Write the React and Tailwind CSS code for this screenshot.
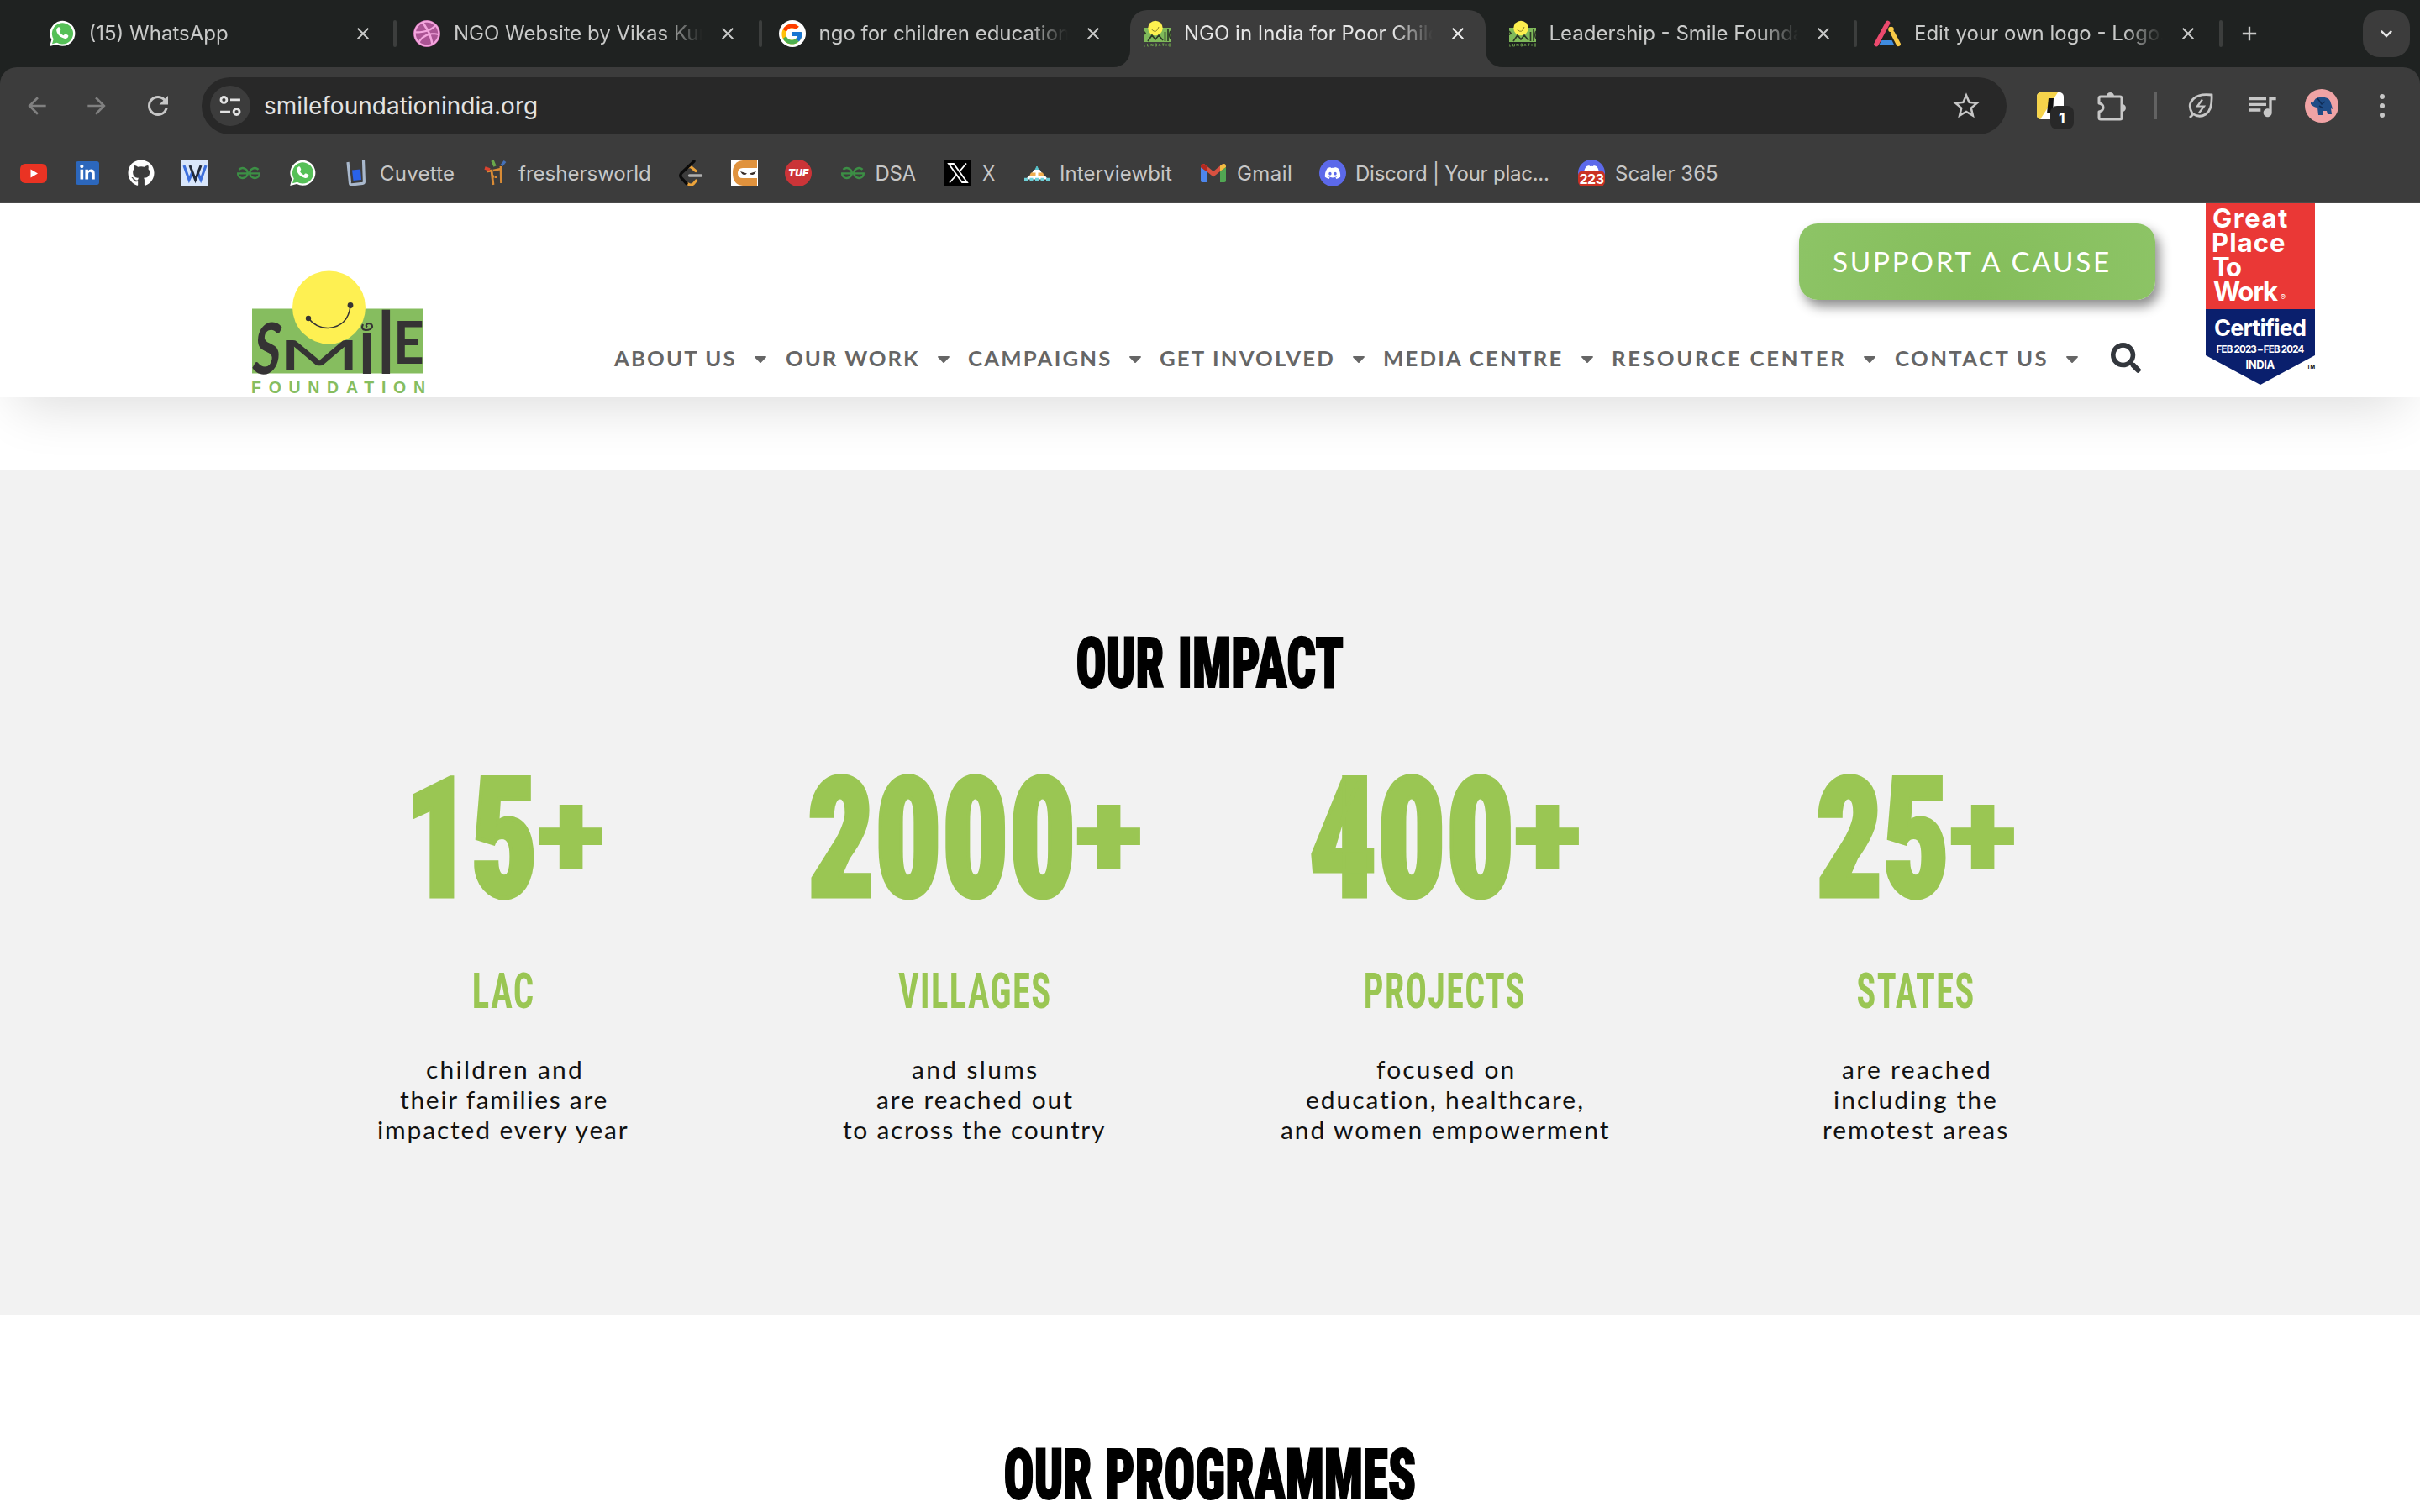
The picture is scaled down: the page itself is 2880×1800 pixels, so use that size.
import React, { useLayoutEffect, useRef, useState } from "react";
import { FaDribbble, FaGithub, FaLinkedinIn, FaDiscord, FaSearch, FaCaretDown } from "react-icons/fa";
import { FcGoogle } from "react-icons/fc";
import { SiGeeksforgeeks } from "react-icons/si";
import { MdArrowBack, MdArrowForward, MdRefresh, MdStarBorder, MdQueueMusic, MdClose, MdAdd, MdKeyboardArrowDown } from "react-icons/md";

const UI = "font-['Inter',sans-serif]";
const LATO = "font-['Lato',sans-serif]";
const DISPLAY = "font-['Roboto',sans-serif] [font-stretch:75%]";

/*
 * Single line of text whose ink is exactly `w` wide and whose baseline sits `h` below the box top.
 * mode "spacing": tracks the letters out; "scale": condenses them; "box": fills w × h with the ink.
 */
function Fit({ w, h, mode = "spacing", stretch = 1, stroke = 0, className = "", children }) {
  const ref = useRef(null);
  const [style, setStyle] = useState({});
  useLayoutEffect(() => {
    const cs = getComputedStyle(ref.current);
    const ctx = document.createElement("canvas").getContext("2d");
    const width = cs.fontStretch === "75%" ? "condensed " : "";
    ctx.font = `${cs.fontWeight} ${width}${cs.fontSize} ${cs.fontFamily}`;
    const tracked = mode !== "spacing" && cs.letterSpacing !== "normal";
    if (tracked) ctx.letterSpacing = cs.letterSpacing;
    const m = ctx.measureText(children);
    const track = tracked ? parseFloat(cs.letterSpacing) : 0;
    const right = Math.min(m.actualBoundingBoxRight, m.width - track + 4) + stroke / 2;
    const left = -m.actualBoundingBoxLeft - stroke / 2;
    const ink = right - left;
    const a = m.fontBoundingBoxAscent;
    const d = m.fontBoundingBoxDescent;
    const base = (h - (a + d)) / 2 + a;
    const dy = h - base;
    if (mode === "box") {
      const s = w / ink;
      const sy = h / (m.actualBoundingBoxAscent + m.actualBoundingBoxDescent);
      setStyle({ transform: `translate(${-left * s}px, ${-(base - m.actualBoundingBoxAscent) * sy}px) scale(${s}, ${sy})` });
    } else if (mode === "scale") {
      const s = w / ink;
      setStyle({ transform: `translate(${-left * s}px, ${dy}px) scaleX(${s})` });
    } else {
      setStyle({
        letterSpacing: `${(w / stretch - ink) / Math.max(1, children.length - 1)}px`,
        transform: `translate(${-left * stretch}px, ${dy}px) scaleX(${stretch})`,
      });
    }
  }, [w, h, mode, stretch, stroke, children]);
  return (
    <div className={`shrink-0 ${className}`} style={{ width: w, height: h, lineHeight: `${h}px` }}>
      <span ref={ref} className="inline-block origin-top-left whitespace-nowrap align-top" style={style}>
        {children}
      </span>
    </div>
  );
}

function WhatsAppIcon() {
  return (
    <svg viewBox="0 0 32 32" className="size-8">
      <path d="M1.200 31 3.300 23.200A15 15 0 1 1 9.200 29Z" fill="#fff" />
      <path d="M4 28.300 5.700 22.600A12.600 12.600 0 1 1 9.800 26.700Z" fill="#55c057" />
      <path d="M11.200 8.600c.6-.6 1.600-.5 2 .3l1 2.300c.2.6 0 1.100-.4 1.500l-.9 1c1 2 2.700 3.600 4.800 4.500l1.200-1.400c.4-.4.9-.5 1.400-.3l2.400 1.200c.6.3.8.8.6 1.500-.5 2-2.300 3-4.200 2.700-5.200-1-9-4.700-9.900-9.300-.200-1.500.8-3.200 2-4Z" fill="#fff" />
    </svg>
  );
}

function SmileMark() {
  return (
    <svg viewBox="0 0 32 32" className="size-8">
      <rect x="0" y="9" width="32" height="17" fill="#7fb95a" />
      <circle cx="14" cy="9.500" r="8.700" fill="#fdf04f" />
      <path d="M9.500 11q5.500 6 8.500-3" fill="none" stroke="#6b6420" strokeWidth=".8" />
      <path d="M0 13l2 2.500-2 2M5 25l5-7 4 5 4-5 5 6M25.500 14v11M29 11v14M32 13q-2.500 5 0 9" fill="none" stroke="#2e3a28" strokeWidth="1.700" />
      <path d="M0 28v3h2M4.500 28v3h2v-3M9 31v-3l2 3v-3M14 28v3h1.500v-3zM18 31l1-3 1 3M22 28h2.500M23.300 28v3M27 28v3M30 28h2v3h-2z" fill="none" stroke="#6fa54e" strokeWidth=".8" />
    </svg>
  );
}

function LogoAiIcon() {
  return (
    <svg viewBox="0 0 32 32" className="size-8">
      <path d="M16.500 3.500 3 28.500" stroke="#ec4a6e" strokeWidth="5.600" strokeLinecap="round" />
      <circle cx="20.500" cy="11" r="3.300" fill="#f8c947" />
      <path d="M22.500 15.500 29.300 28.500" stroke="#f8c947" strokeWidth="5.200" strokeLinecap="round" />
      <path d="M9.500 24h12l3 6H8.500q-2.500 0-1.500-2Z" fill="#3f8ce0" />
    </svg>
  );
}

const tabs = [
  { title: "(15) WhatsApp", icon: <WhatsAppIcon /> },
  { title: "NGO Website by Vikas Kumar", icon: <span className="flex size-8 items-center justify-center rounded-full bg-[#ab5494]"><FaDribbble className="size-8 text-[#f3a5dd]" /></span> },
  { title: "ngo for children education", icon: <span className="flex size-8 items-center justify-center rounded-full bg-white"><FcGoogle className="size-[29px]" /></span> },
  { title: "NGO in India for Poor Children", icon: <SmileMark />, active: true },
  { title: "Leadership - Smile Foundation", icon: <SmileMark /> },
  { title: "Edit your own logo - Logo.com", icon: <LogoAiIcon /> },
];

function Tab({ tab, divider }) {
  return (
    <div className="relative flex h-20 w-[434.500px] shrink-0 pt-3">
      {tab.active && (
        <div className="absolute top-3 left-0 h-17 w-[423px] rounded-t-[20px] bg-[#3c3c3c]">
          <svg viewBox="0 0 20 20" className="absolute bottom-0 -left-5 size-5"><path d="M20 0v20H0A20 20 0 0 0 20 0" fill="#3c3c3c" /></svg>
          <svg viewBox="0 0 20 20" className="absolute -right-5 bottom-0 size-5"><path d="M0 0v20h20A20 20 0 0 1 0 0" fill="#3c3c3c" /></svg>
        </div>
      )}
      <div className="relative flex h-14 items-center pl-4">
        {tab.icon}
        <div className={`ml-4 w-[296px] overflow-hidden text-[24px] leading-14 whitespace-nowrap ${tab.active ? "text-[#e6e6e6]" : "text-[#c9cac9]"} [mask-image:linear-gradient(to_right,#000_84%,transparent)]`}>{tab.title}</div>
        <MdClose className={`ml-[18px] size-6 ${tab.active ? "text-[#ededed]" : "text-[#c9cac9]"}`} />
      </div>
      {divider && <div className="absolute top-6 right-1 h-8 w-1 rounded-full bg-[#3c3e3d]" />}
    </div>
  );
}

function Gfg() {
  return <SiGeeksforgeeks className="size-8 p-0.5 text-[#3c8f45]" />;
}

/* w: label width, slot: distance reserved for the whole entry */
const bookmarks = [
  { slot: 32, icon: <svg viewBox="0 0 32 32" className="size-8"><rect y="5" width="32" height="23" rx="6" fill="#ea3323" /><path d="M12.500 11.500v10l8.500-5z" fill="#fff" /></svg> },
  { slot: 32, icon: <span className="mx-0.5 flex h-7 w-7 items-center justify-center rounded-[3px] bg-[#2c67bc]"><FaLinkedinIn className="size-5 text-white" /></span> },
  { slot: 32, icon: <FaGithub className="size-8 text-white" /> },
  { slot: 32, icon: <svg viewBox="0 0 32 32" className="size-8"><rect width="32" height="32" fill="#d9e6fb" /><path d="M3 7l6 17 4-9M19 15l4 9 6-17" fill="none" stroke="#3d6fdc" strokeWidth="3.200" /><path d="M10 7l6.500 17L23 7" fill="none" stroke="#222a3a" strokeWidth="3" /></svg> },
  { slot: 32, icon: <Gfg /> },
  { slot: 32, icon: <WhatsAppIcon /> },
  { slot: 132, icon: <svg viewBox="0 0 32 32" className="size-8"><path d="M6 3l2.500 25q.3 2 2 1.800l13-1.500q2-.300 1.900-2.300L24.500 1" fill="none" stroke="#a9b8cc" strokeWidth="3.200" /><path d="M11 12.500l10-1 1 12.500-9.500 1z" fill="#2a62e8" /></svg>, label: "Cuvette", w: 87 },
  { slot: 202, icon: <svg viewBox="0 0 32 32" className="size-8"><path d="M7 14l6-1 2 17M24 8l.5 20M15 13l9-2M13 20h3M18 19v3" fill="none" stroke="#d98b35" strokeWidth="2.800" /><path d="M5 10l6 2" stroke="#d9432f" strokeWidth="3.500" /><path d="M14 1l3 7" stroke="#6aa84a" strokeWidth="3.500" /><path d="M29 2l-4 5" stroke="#4571b8" strokeWidth="3.500" /></svg>, label: "freshersworld", w: 156 },
  { slot: 32, icon: <svg viewBox="0 0 32 32" className="size-8"><path d="M13 9l3-.5 6 5M13 29q3 2.500 6 0l3.500-4" fill="none" stroke="#eba33b" strokeWidth="3.200" strokeLinecap="round" /><path d="M20 2 5 16q-2.500 3 0 6l6 6.500" fill="none" stroke="#0b0b0b" strokeWidth="3.400" strokeLinecap="round" /><path d="M14.500 19h14" stroke="#b0b0b0" strokeWidth="3.400" strokeLinecap="round" /></svg> },
  { slot: 32, icon: <svg viewBox="0 0 32 32" className="size-8"><rect width="32" height="32" fill="#fff" /><path d="M31 1H14Q2 2 2 16t12 15h17z" fill="#e0923d" /><path d="M31 10H14q-6 0-6 6t6 6h17z" fill="#fff" /><path d="M11 14l8 2.500q-2 2-4 1.500t-4-4M30 14l-8 2.500q2 2 4 1.500t4-4" fill="#3a2f2a" /></svg> },
  { slot: 32.5, icon: <span className="flex size-8 items-center justify-center rounded-full bg-[#cb3438] text-[12px] leading-none font-black text-white italic">TUF</span> },
  { slot: 93.5, icon: <Gfg />, label: "DSA", w: 46 },
  { slot: 62, icon: <svg viewBox="0 0 32 32" className="size-8"><rect width="32" height="32" fill="#000" /><path d="M5 5h6l16 22h-6zM26 4.500 18 14M14.500 18 6 27.500" fill="none" stroke="#fff" strokeWidth="1.800" /></svg>, label: "X", w: 15, single: true },
  { slot: 178, icon: <svg viewBox="0 0 32 32" className="size-8"><path d="M16 8l2 4h-4z" fill="#59c4cc" stroke="#59c4cc" /><path d="M12.500 12h7l2.500 4H10z" fill="#fff" /><path d="M9 15.500h14l2 4H7z" fill="#f0ad4e" /><path d="M14.500 15h3v5h-3z" fill="#fff" /><path d="M6 19.500h20l3 4H3z" fill="#fff" /><path d="M1 23.500h30" stroke="#6fd0d8" strokeWidth="3.500" strokeDasharray="4 2.500" /></svg>, label: "Interviewbit", w: 132 },
  { slot: 110, icon: <svg viewBox="0 0 32 32" className="size-8"><path d="M1 9v16q0 2 2 2h5V14z" fill="#4d86ec" /><path d="M24 14v13h5q2 0 2-2V9z" fill="#51a753" /><path d="M1 9q0-4 4-4l11 9L27 5l-3 9-8 6.500-8-6.500z" fill="#d85140" /><path d="M24 7.500q7-5.500 7 1.500l-7 5z" fill="#f2bd42" /><path d="M8 7.500Q1 2 1 9l7 5z" fill="#b3281f" /></svg>, label: "Gmail", w: 63 },
  { slot: 276, icon: <span className="flex size-8 items-center justify-center rounded-full bg-[#5c69ea]"><FaDiscord className="size-5 text-white" /></span>, label: "Discord | Your plac...", w: 228 },
  { slot: 166, icon: <span className="relative flex size-8 justify-center rounded-full bg-[#5c69ea]"><FaDiscord className="mt-1 size-5 text-white" /><span className="absolute bottom-0 flex h-[19px] w-8 items-center justify-center rounded-[6px] bg-[#ca3123] text-[16px] font-bold tracking-[-0.5px] text-white">223</span></span>, label: "Scaler 365", w: 121 },
];

function BrowserChrome() {
  return (
    <div className={`relative z-10 flex h-[242px] shrink-0 flex-col border-b-2 border-[#4a4a4a] bg-[#1f2221] ${UI}`}>
      <div className="flex h-20 shrink-0 pl-[41.500px]">
        {tabs.map((t, i) => (
          <Tab key={t.title} tab={t} divider={i !== 2 && i !== 3} />
        ))}
        <div className="flex flex-1 items-center justify-between pr-3 pl-3.5">
          <MdAdd className="size-7 text-[#c9cac9]" />
          <div className="flex size-14 items-center justify-center rounded-[20px] bg-[#3c3c3c]">
            <MdKeyboardArrowDown className="size-7 text-[#e6e6e6]" />
          </div>
        </div>
      </div>
      <div className="flex flex-1 flex-col rounded-t-[20px] bg-[#3c3c3c]">
        <div className="flex h-[92px] items-center pl-7">
          <MdArrowBack className="size-8 text-[#808080]" />
          <MdArrowForward className="ml-[39px] size-8 text-[#808080]" />
          <MdRefresh className="ml-[39px] size-9 text-[#c7c7c7]" />
          <div className="ml-[34px] flex h-17 w-[2148px] items-center rounded-full bg-[#282828] pl-2.5">
            <div className="flex size-12 items-center justify-center rounded-full bg-[#3c3c3c]">
              <svg viewBox="0 0 24 24" className="size-6.5" fill="none" stroke="#e3e3e3" strokeWidth="2.600">
                <circle cx="5" cy="5.500" r="3.200" /><path d="M12 5.500h11M1 18.500h11" /><circle cx="19" cy="18.500" r="3.200" />
              </svg>
            </div>
            <Fit w={323} h={20} className="ml-[17px] text-[28px] text-[#e3e3e3]">smilefoundationindia.org</Fit>
            <MdStarBorder className="mr-[29px] ml-auto size-[38px] text-[#c7c7c7]" />
          </div>
          <div className="relative ml-9 size-8">
            <svg viewBox="0 0 32 32" className="size-8"><rect width="32" height="32" rx="5" fill="#fff" /><path d="M5 0h20L4 32H5q-5 0-5-5V5q0-5 5-5" fill="#f5d34b" /><path d="M14 7h6l-1 18h-7z" fill="#111" /></svg>
            <span className="absolute top-4 left-4 flex size-7 items-center justify-center rounded-[8px] bg-[#282828] text-[18px] font-bold text-white">1</span>
          </div>
          <svg viewBox="0 0 36 36" className="ml-[39px] size-9" fill="none">
            <path d="M5 7h23q2 0 2 2v23q0 2-2 2H5q-2 0-2-2v-7q5-1 5-5t-5-5V9q0-2 2-2Z" stroke="#c7c7c7" strokeWidth="3" strokeLinejoin="round" />
            <path d="M12 6.500a4.500 4.500 0 0 1 9 0zM30.500 16a4.500 4.500 0 0 1 0 9z" fill="#c7c7c7" />
          </svg>
          <div className="ml-[33px] h-8 w-[3px] bg-[#626262]" />
          <svg viewBox="0 0 32 32" className="ml-[36px] size-8" fill="none" stroke="#c7c7c7" strokeWidth="2.800">
            <path d="M3 30l4-4M29 3Q14 1 7 8T6 25Q14 31 22 26T29 3Z" /><path d="M18 8.500l-6 8h8l-6 8" strokeWidth="2.200" />
          </svg>
          <MdQueueMusic className="ml-[37px] size-[40px] text-[#c7c7c7]" />
          <div className="ml-[31px] size-10 overflow-hidden rounded-full bg-[#f0a3a5]">
            <svg viewBox="0 0 40 40" className="size-10"><path d="M7 15q1 2 3 1 2-6 7-6 10-1 13 4l2 6 1 4-2-1 1 7h-5l-1-4h-4v5h-6l-1-9q-4 0-8-4z" fill="#1f4c86" /><path d="M15 11l5 7 4-3M17 20l5 3" stroke="#102c55" fill="none" strokeWidth="1.500" /></svg>
          </div>
          <div className="ml-[49px] flex flex-col gap-[5px]">
            <i className="size-1.5 rounded-full bg-[#c7c7c7]" /><i className="size-1.5 rounded-full bg-[#c7c7c7]" /><i className="size-1.5 rounded-full bg-[#c7c7c7]" />
          </div>
        </div>
        <div className="flex h-[68px] items-center gap-8 pl-6">
          {bookmarks.map((b, i) => (
            <div key={i} className="flex shrink-0 items-center gap-[13px]" style={{ width: b.slot }}>
              {b.icon}
              {b.label && <Fit w={b.w} h={18} mode={b.single ? "scale" : "spacing"} className="text-[24px] text-[#c7c7c7]">{b.label}</Fit>}
            </div>
          ))}
        </div>
      </div>
    </div>
  );
}

function SmileLogo() {
  const L = "font-['Lato',sans-serif]";
  return (
    <svg viewBox="0 0 206 148" className="h-[148px] w-[206px] overflow-visible">
      <rect x="0" y="45.500" width="204" height="77" fill="#86bd5f" />
      <circle cx="91.500" cy="44" r="43.500" fill="#fef052" />
      <g fill="#353334" fontSize="100">
        <text className={`${L} font-bold`} transform="translate(-2 122.500) skewX(-8) scale(.6 .84)">S</text>
        <text className={`${L} font-medium`} transform="translate(31 118) scale(1.050 .48)">M</text>
        <text className={`${L} font-bold`} transform="translate(127 122.500) scale(.75 .94)">ı</text>
        <text className={`${L} font-bold`} transform="translate(149 122.500) scale(.7 1.060)">I</text>
        <text className={`${L} font-bold`} transform="translate(168 111) scale(.64 .7)">E</text>
      </g>
      <g fill="none" stroke="#353334">
        <path d="M67 57q10 12 24 11.500 23-2 26-26" strokeWidth="1.600" />
        <path d="M132 64q-3 6 3 7 7 0 8-4 0-4-5-4-4 2-1 4.500" strokeWidth="2.200" />
      </g>
      <circle cx="67" cy="57" r="3.200" fill="#353334" />
      <circle cx="117" cy="41.500" r="3.400" fill="#353334" />
      <text x="-1" y="146" fontSize="19.500" textLength="207" lengthAdjust="spacing" fill="#86bd5f" className="font-['Liberation_Sans',sans-serif] font-bold">FOUNDATION</text>
    </svg>
  );
}

const nav = [
  ["ABOUT US", 145, 205], ["OUR WORK", 158, 217], ["CAMPAIGNS", 169, 228], ["GET INVOLVED", 207, 267],
  ["MEDIA CENTRE", 212, 272], ["RESOURCE CENTER", 276, 336], ["CONTACT US", 181, 257],
];

function CertifiedBadge() {
  return (
    <div className={`relative ml-[60px] h-[216px] w-[130px] shrink-0 font-bold text-white ${UI}`}>
      <div className="flex h-[126px] flex-col bg-[#ea3836] pt-1.5 pl-[9px]">
        <Fit w={88} h={23} className="mb-1.5 text-[31px]">Great</Fit>
        <Fit w={85} h={23} className="mb-1.5 text-[31px]">Place</Fit>
        <Fit w={33} h={23} className="mb-1.5 text-[31px]">To</Fit>
        <div className="flex items-end gap-[3px]">
          <Fit w={77} h={23} className="text-[31px]">Work</Fit>
          <span className="text-[9px] leading-[8px] font-normal">®</span>
        </div>
      </div>
      <div className="flex h-[90px] flex-col items-center bg-[#0a1f6d] pt-3 [clip-path:polygon(0_0,100%_0,100%_61%,50%_100%,0_61%)]">
        <Fit w={108} h={20} className="text-[27px]">Certified</Fit>
        <Fit w={105} h={8} className="mt-3 text-[11.500px]">FEB 2023 – FEB 2024</Fit>
        <Fit w={35} h={10} className="mt-[9px] text-[13px]">INDIA</Fit>
      </div>
      <span className="absolute right-0 bottom-[18px] text-[6px] leading-[6px] text-black">TM</span>
    </div>
  );
}

function SiteHeader() {
  return (
    <header className={`relative flex h-[231px] shrink-0 bg-white pl-[300px] shadow-[0_30px_60px_-20px_rgba(0,0,0,0.14)] ${LATO}`}>
      <div className="mt-20 mr-[224px] h-[148px] w-[206px] shrink-0"><SmileLogo /></div>
      <div className="flex w-[1835px] shrink-0 flex-col pt-6">
        <div className="flex h-[91px] w-[424px] items-center self-end rounded-[22px] bg-[radial-gradient(circle_at_bottom,#84bd5a,#8dc466)] pt-0.5 pl-[41px] shadow-[5px_8px_14px_rgba(0,0,0,0.45)]">
          <Fit w={331} h={23} stretch={1.04} className="text-[32px] text-white">SUPPORT A CAUSE</Fit>
        </div>
        <nav className="mt-[51px] flex h-9 items-center">
          {nav.map(([label, w, slot]) => (
            <div key={label} className="flex shrink-0 items-center" style={{ width: slot }}>
              <Fit w={w} h={17} stretch={1.05} className="mt-[3px] text-[24.500px] font-bold text-[#666]">{label}</Fit>
              <FaCaretDown className="mt-0.5 ml-[21px] h-6 w-[18px] text-[#666]" />
            </div>
          ))}
          <FaSearch className="size-9 shrink-0 text-[#33373d]" />
        </nav>
      </div>
      <CertifiedBadge />
    </header>
  );
}

const impact = [
  { num: "15", nw: 145, pad: "pl-2.5", unit: "LAC", uw: 70, lines: [["children and", 183], ["their families are", 246], ["impacted every year", 298]] },
  { num: "2000", nw: 313, pad: "pl-0.5", unit: "VILLAGES", uw: 180, lines: [["and slums", 149], ["are reached out", 233], ["to across the country", 312]] },
  { num: "400", nw: 238, pad: "", unit: "PROJECTS", uw: 188, lines: [["focused on", 162.5], ["education, healthcare,", 328], ["and women empowerment", 391]] },
  { num: "25", nw: 153, pad: "pl-0.5", unit: "STATES", uw: 137, lines: [["are reached", 175], ["including the", 192], ["remotest areas", 219]] },
];

/* Section title, each word condensed to its own width. */
function Title({ words }) {
  return (
    <h2 className={`flex gap-[19.500px] text-[84px] font-black text-black [-webkit-text-stroke:2px_#000] ${DISPLAY}`}>
      {words.map(([t, w]) => (
        <Fit key={t} w={w} h={60} mode="scale" stroke={2}>{t}</Fit>
      ))}
    </h2>
  );
}

function Impact() {
  return (
    <section className="relative mt-[87px] flex h-[1005px] shrink-0 flex-col items-center bg-[#f2f2f2] pt-[198px]">
      <Title words={[["OUR", 103], ["IMPACT", 194.5]]} />
      <div className="mt-[106px] -ml-0.5 grid w-[2240px] grid-cols-4">
        {impact.map((it) => (
          <div key={it.unit} className="flex flex-col items-center">
            <div className={`flex h-[146px] gap-[5px] font-black text-[#9ac653] [-webkit-text-stroke:5px_#9ac653] ${DISPLAY} ${it.pad}`}>
              <Fit w={it.nw} h={143.500} mode="scale" stroke={5} className="text-[198px]">{it.num}</Fit>
              <Fit w={76} h={76} mode="box" className="mt-[35px] text-[140px] [-webkit-text-stroke:0px]">+</Fit>
            </div>
            <Fit w={it.uw} h={42} mode="scale" className={`mt-[88px] text-[59px] font-bold tracking-[2px] text-[#9ac653] ${DISPLAY}`}>{it.unit}</Fit>
            <div className={`mt-16 flex flex-col items-center gap-4 text-[28px] text-[#111] ${LATO}`}>
              {it.lines.map(([t, w]) => (
                <Fit key={t} w={w} h={20} stretch={1.07}>{t}</Fit>
              ))}
            </div>
          </div>
        ))}
      </div>
    </section>
  );
}

export default function App() {
  return (
    <div className="flex h-[1800px] w-[2880px] flex-col overflow-hidden bg-white">
      <BrowserChrome />
      <SiteHeader />
      <Impact />
      <section className="flex flex-1 flex-col items-center pt-[159px]">
        <Title words={[["OUR", 103], ["PROGRAMMES", 366.5]]} />
      </section>
    </div>
  );
}
